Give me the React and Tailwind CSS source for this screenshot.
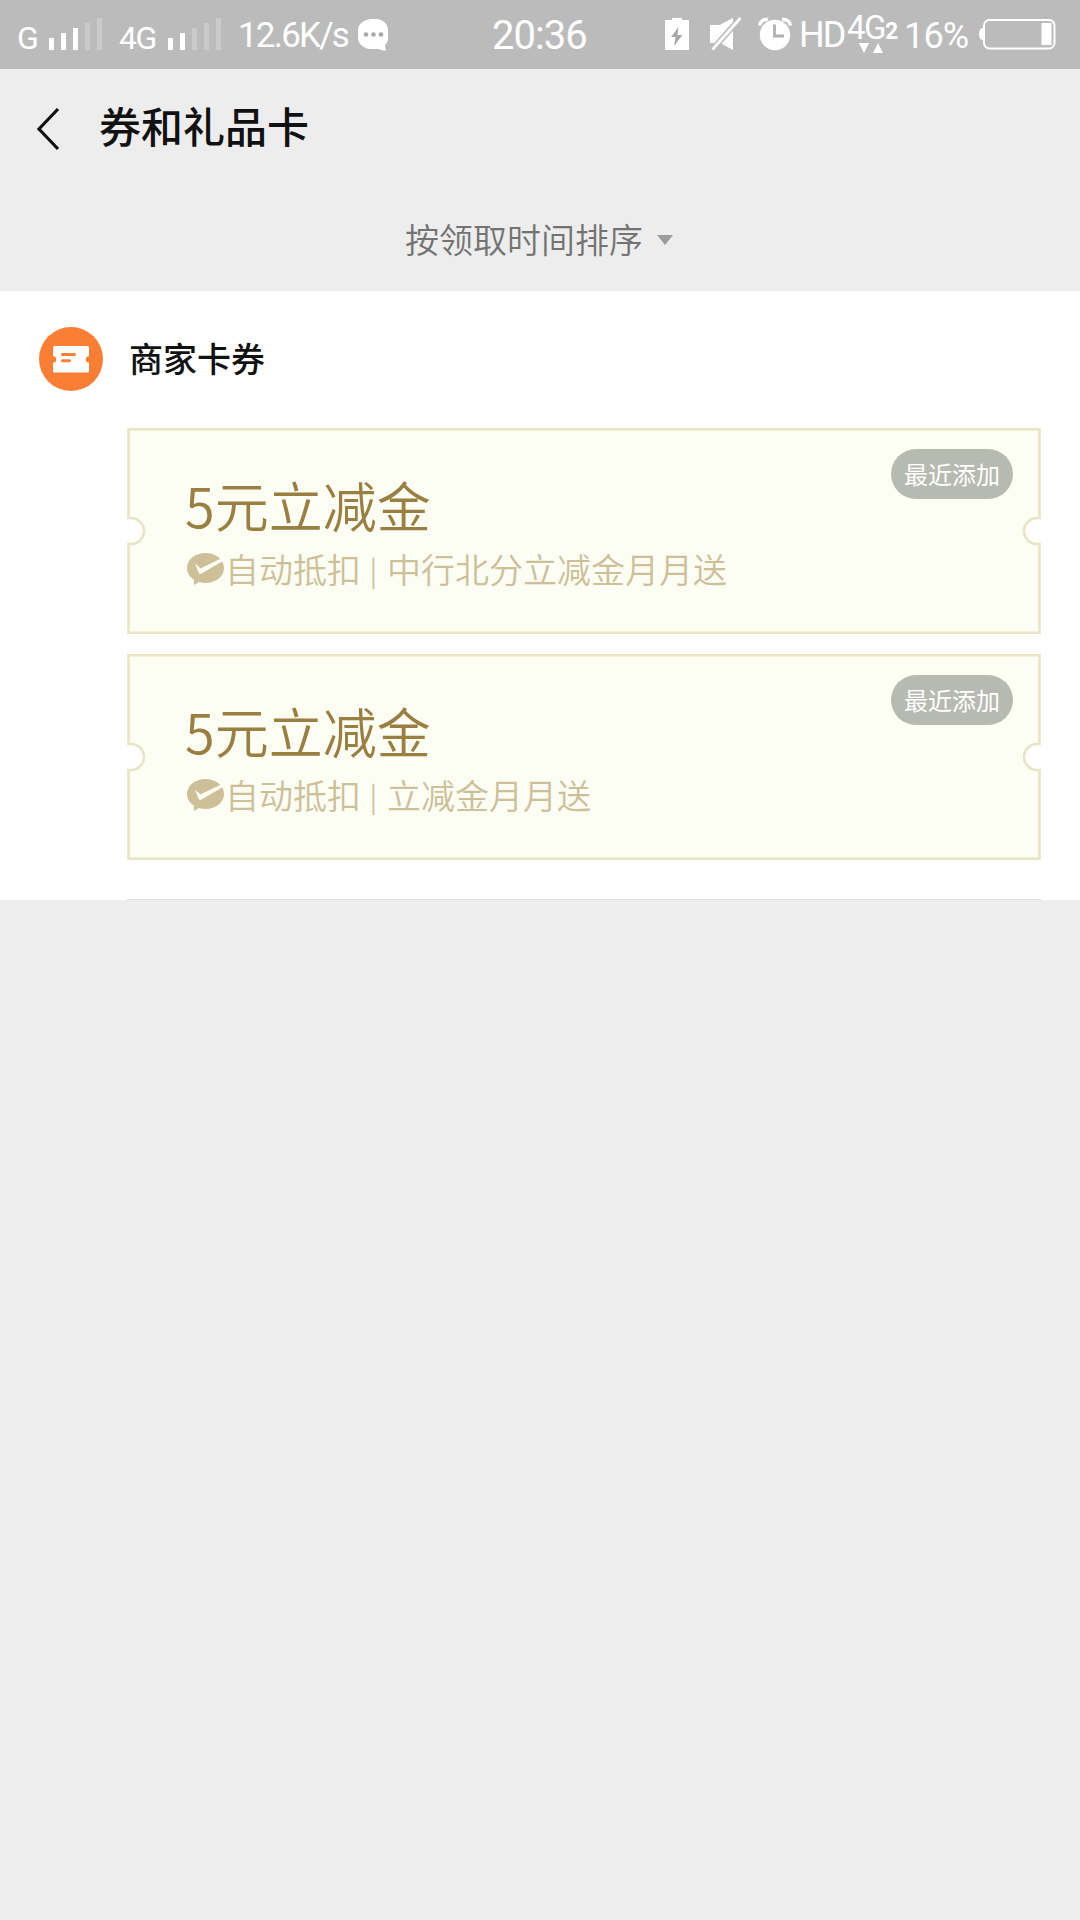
const coupons = [
  { id: 1, title: "5元立减金", tag: "自动抵扣", desc: "中行北分立减金月月送" },
  { id: 2, title: "5元立减金", tag: "自动抵扣", desc: "立减金月月送" },
];

function Signal({ level }) {
  const heights = ["h-[12px]", "h-[17px]", "h-[22px]", "h-[27px]", "h-[32px]"];
  return (
    <div className="flex items-end gap-[7px] h-[32px]">
      {heights.map((h, i) => (
        <div key={h} className={`w-[5px] ${h} ${i < level ? "bg-white" : "bg-[#cacaca]"}`}></div>
      ))}
    </div>
  );
}

function StatusBar() {
  return (
    <div className="h-[69px] bg-[#bbbbbb] text-white flex font-['Roboto','Liberation_Sans',sans-serif] whitespace-nowrap">
      {/* LEFT */}
      <div className="flex w-[492px] pl-[17px]">
        <span className="w-[32px] mt-[18px] text-[32px] leading-[40px]">G</span>
        <div className="mt-[18px]"><Signal level={3} /></div>
        <span className="w-[49px] ml-[17px] mt-[18px] text-[32px] leading-[40px] tracking-[-1.5px]">4G</span>
        <div className="mt-[18px]"><Signal level={2} /></div>
        <span className="w-[119px] ml-[17px] mr-px mt-[16px] text-[35px] leading-[40px] tracking-[-1.8px]">12.6K/s</span>
        <svg className="mt-[18px]" width="31" height="34" viewBox="0 0 31 34">
          <path d="M14 1h4c7 0 12 5 12 11v8c0 3-1 5-3 7 0 3 .5 4 1.500 5.500-3 .3-6-.5-8-1.500H13C6 31 0 26 0 20v-8C0 6 6 1 14 1z" fill="#fff" />
          <circle cx="8" cy="16.500" r="2.300" fill="#a9a9a9" />
          <circle cx="15.500" cy="16.500" r="2.300" fill="#a9a9a9" />
          <circle cx="23" cy="16.500" r="2.300" fill="#a9a9a9" />
        </svg>
      </div>

      {/* CLOCK */}
      <span className="w-[173px] mt-[12px] text-[40px] leading-[48px] tracking-[-1px]">20:36</span>

      {/* RIGHT */}
      <svg className="mt-[17px]" width="24" height="34" viewBox="0 0 24 34">
        <path d="M7 1h10v2h7v30H0V3h7z" fill="#fff" />
        <path d="M13.500 10 6 20h4.500L9 29l8.500-11h-5z" fill="#a8a8a8" />
      </svg>
      <svg className="ml-[21px] mt-[16px]" width="32" height="36" viewBox="0 0 32 36">
        <path d="M0 9h9.500L23 2v32L10 27H0z" fill="#fff" />
        <path d="M2.500 33.500 30.500 2" stroke="#bbb" strokeWidth="6" />
        <path d="M2.500 33.500 30.500 2" stroke="#fff" strokeWidth="2.800" />
      </svg>
      <svg className="ml-[16px] mt-[17px]" width="34" height="34" viewBox="0 0 34 34">
        <circle cx="17" cy="18" r="15.200" fill="#fff" />
        <path d="M1.800 8.500C2 4.500 5 2 10 2.500M32.200 8.500C32 4.500 29 2 24 2.500" fill="none" stroke="#fff" strokeWidth="3.600" />
        <path d="M16.500 7.500v11.500H26" fill="none" stroke="#b0b0b0" strokeWidth="2.800" />
      </svg>
      <span className="w-[46px] ml-[7px] mt-[15px] text-[36px] leading-[40px] tracking-[-2px]">HD</span>
      <div className="w-[58px] mt-[16px] pl-[2px] flex flex-col">
        <div className="flex items-end h-[26px]">
          <span className="text-[33px] leading-[28px] tracking-[-1.5px]">4G</span>
          <span className="text-[23px] leading-[21px] font-bold">2</span>
        </div>
        <svg className="ml-[12px] mt-[1px]" width="24" height="10" viewBox="0 0 24 10">
          <path d="M0 0h10L5 10zM14 10h10L19 0z" fill="#fff" />
        </svg>
      </div>
      <span className="w-[74px] ml-[1px] mt-[16px] text-[36px] leading-[40px] tracking-[-0.8px]">16%</span>
      <svg className="mt-[19px] shrink-0" width="78" height="31" viewBox="0 0 78 31">
        <path d="M5 9v12C2 21 1 18 1 15s1-6 4-6z" fill="#fff" />
        <rect x="6" y="1" width="70.500" height="28.500" rx="5.500" fill="none" stroke="#fff" strokeWidth="2" />
        <rect x="63.500" y="4" width="10" height="22" fill="#fff" />
      </svg>
    </div>
  );
}

function CheckBubble() {
  return (
    <svg width="37" height="33" viewBox="0 0 37 33" className="shrink-0">
      <path d="M18.500 0C28.700 0 37 6.600 37 15s-8.300 15-18.500 15c-2.300 0-4.500-.3-6.500-.9L7 32l-.2-5.500C2.700 23.800 0 19.700 0 15 0 6.600 8.300 0 18.500 0z" fill="#cdbf98" />
      <path d="M8 10.500 13.500 15.500 35 5 36 8 14.500 20.500C13.200 21.100 12 20.600 11.500 19.500z" fill="#fcfef4" />
    </svg>
  );
}

function Coupon({ coupon }) {
  return (
    <div className="relative h-[206px] w-[914px]">
      {/* ticket outline with a notch on each side */}
      <svg className="absolute inset-0" width="914" height="206" viewBox="0 0 914 206">
        <path
          d="M1.500 1.300H912.500V90H910.500A13.500 13 0 0 0 910.500 116H912.500V204.700H1.500V116H3.500A13.500 13 0 0 0 3.500 90H1.500Z"
          fill="#fcfef4"
          stroke="#e9e4c2"
          strokeWidth="2.600"
        />
      </svg>
      <div className="relative flex flex-col pl-[58px] pt-[45px]">
        <p className="text-[54px] leading-[64px] font-[350] text-[#9a7f42]">{coupon.title}</p>
        <div className="flex items-center h-[40px] mt-[12px] text-[34px] leading-[40px] font-[350] text-[#cdbf98] pl-[2px]">
          <CheckBubble />
          <span className="ml-[1px]">{coupon.tag}</span>
          <span className="w-[26px] pr-px text-center text-[28px] leading-[38px]">|</span>
          <span>{coupon.desc}</span>
        </div>
      </div>
      <span className="absolute right-[28px] top-[21px] w-[122px] h-[50px] rounded-full bg-[#b7bab0] text-white text-[24px] leading-[50px] text-center">
        最近添加
      </span>
    </div>
  );
}

export default function App() {
  return (
    <div className="w-[1080px] h-[1920px] overflow-hidden bg-[#ededed] font-['Noto_Sans_CJK_SC',sans-serif]">
      <StatusBar />

      {/* TITLE BAR */}
      <div className="h-[116px] flex items-center">
        <svg className="ml-[36px] mt-[3px]" width="24" height="44" viewBox="0 0 24 44">
          <path d="M22 2 3 22 22 42" fill="none" stroke="#111" strokeWidth="3.200" />
        </svg>
        <h1 className="ml-[39px] mb-[4px] text-[42px] leading-[60px] font-medium text-[#111]">券和礼品卡</h1>
      </div>

      {/* SORT */}
      <div className="h-[106px] flex items-center pl-[405px] text-[#737373]">
        <span className="mt-[2px] text-[34px] leading-[50px] font-[350]">按领取时间排序</span>
        <svg className="ml-[14px] mt-[4px]" width="16" height="10" viewBox="0 0 16 10">
          <path d="M0 0h16L8 10z" fill="#9c9c9c" />
        </svg>
      </div>

      {/* COUPONS */}
      <div className="h-[609px] bg-white flex flex-col">
        <div className="flex items-center h-[137px] pl-[39px] pb-[2px]">
          <svg width="64" height="64" viewBox="0 0 64 64">
            <circle cx="32" cy="32" r="32" fill="#fa7f35" />
            <path d="M15.500 19h33q1.500 0 1.500 1.500V29.200a3.200 3.200 0 0 0 0 6.400v8.400q0 1.500-1.500 1.500h-33q-1.500 0-1.500-1.500v-8.400a3.200 3.200 0 0 0 0-6.400v-8.700q0-1.500 1.500-1.500z" fill="#fff" />
            <path d="M23.500 27.500h12M23.500 33.800h7" stroke="#fa7f35" strokeWidth="3" strokeLinecap="round" />
          </svg>
          <h2 className="ml-[26px] mb-px text-[34px] leading-[50px] font-medium text-[#111]">商家卡券</h2>
        </div>
        <div className="flex flex-col gap-[20px] pl-[127px]">
          {coupons.map((c) => (
            <Coupon key={c.id} coupon={c} />
          ))}
        </div>
        <div className="mt-auto ml-[127px] w-[914px] h-px bg-[#dedede]"></div>
      </div>
    </div>
  );
}
